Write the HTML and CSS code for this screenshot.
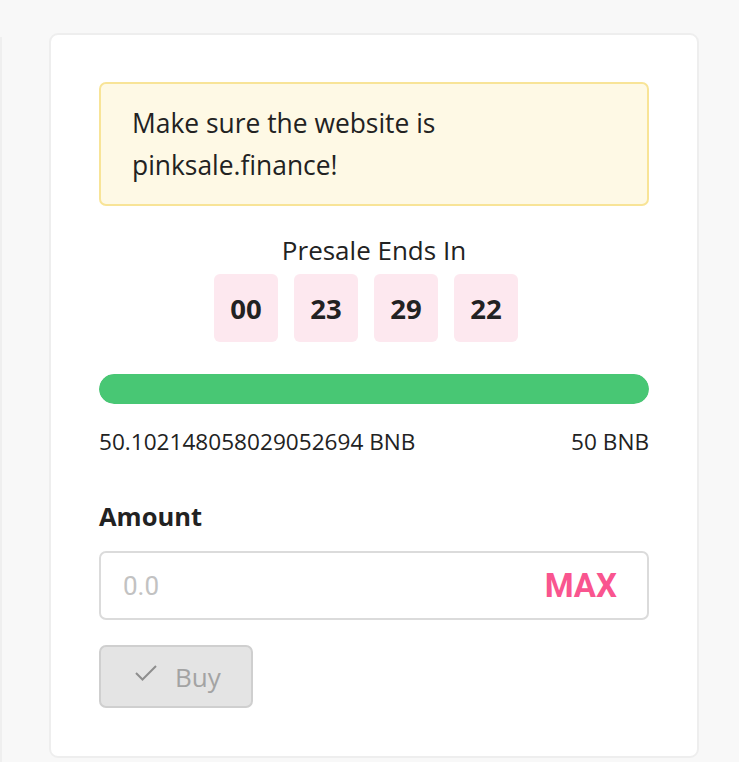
FILE: index.html
```html
<!DOCTYPE html>
<html lang="en">
<head>
<meta charset="utf-8">
<title>Presale</title>
<link rel="stylesheet" href="styles.css">
</head>
<body>
<div class="page">
  <div class="side-edge"></div>
  <div class="card">
    <div class="alert">Make sure the website is pinksale.finance!</div>
    <div class="ends-title">Presale Ends In</div>
    <div class="timer">
      <div class="tbox">00</div>
      <div class="tbox">23</div>
      <div class="tbox">29</div>
      <div class="tbox">22</div>
    </div>
    <div class="progress"><div class="progress-fill" style="width:100%"></div></div>
    <div class="amounts">
      <span>50.102148058029052694 BNB</span>
      <span>50 BNB</span>
    </div>
    <div class="label">Amount</div>
    <div class="input">
      <span class="placeholder">0.0</span>
      <span class="max">MAX</span>
    </div>
    <div class="btn-row">
      <div class="buy-btn">
        <svg class="check" width="24" height="20" viewBox="0 0 24 20"><polyline points="2,10 8.5,16.5 22,3" fill="none" stroke="#8e8e8e" stroke-width="2" stroke-linejoin="miter"/></svg>
        <span>Buy</span>
      </div>
    </div>
  </div>
</div>
</body>
</html>
```
FILE: styles.css
```css
html, body {
  margin: 0;
  padding: 0;
  background: #f8f8f8;
}
body {
  font-family: "Open Sans", "Noto Sans", sans-serif;
  color: #222;
}
.page {
  display: flex;
  align-items: flex-start;
  padding-top: 33px;
  height: 729px;
  overflow: hidden;
}
.side-edge {
  width: 2px;
  margin-top: 4px;
  height: 730px;
  background: #efefef;
  flex: none;
}
.card {
  margin-left: 47px;
  width: 550px;
  background: #fff;
  border: 2px solid #eeeeee;
  border-radius: 9px;
  padding: 47px 48px 48px;
  display: flex;
  flex-direction: column;
  flex: none;
}
.alert {
  background: #fef9e5;
  border: 2px solid #f8e497;
  border-radius: 7px;
  padding: 18px 40px 18px 31px;
  font-size: 26.4px;
  line-height: 42px;
  color: #222;
}
.ends-title {
  margin-top: 26px;
  text-align: center;
  font-size: 26px;
  line-height: 36px;
}
.timer {
  margin-top: 6px;
  display: flex;
  justify-content: center;
}
.tbox {
  width: 64px;
  height: 68px;
  margin-right: 16px;
  background: #fde8ef;
  border-radius: 6px;
  display: flex;
  align-items: center;
  justify-content: center;
  font-weight: 700;
  font-size: 27.5px;
  color: #222;
}
.progress {
  margin-top: 32px;
  height: 30px;
  border-radius: 15px;
  background: #eeeeee;
  overflow: hidden;
}
.progress-fill {
  height: 100%;
  background: #48c774;
  border-radius: 15px;
}
.amounts {
  margin-top: 23px;
  display: flex;
  justify-content: space-between;
  font-size: 22.6px;
  line-height: 30px;
  color: #222;
}
.label {
  margin-top: 41px;
  font-weight: 700;
  font-size: 25.5px;
  line-height: 36px;
  color: #222;
}
.input {
  margin-top: 17px;
  height: 65px;
  border: 2px solid #dbdbdb;
  border-radius: 7px;
  display: flex;
  align-items: center;
  justify-content: space-between;
  padding: 0 30px 0 22px;
}
.placeholder {
  font-family: Roboto, "Noto Sans", sans-serif;
  font-size: 26px;
  color: #c2c2c2;
}
.max {
  font-family: Roboto, "Noto Sans", sans-serif;
  font-weight: 700;
  font-size: 33px;
  color: #f9558f;
}
.btn-row {
  margin-top: 25px;
  display: flex;
}
.buy-btn {
  height: 59px;
  padding: 0 30px 0 33px;
  background: #e4e4e4;
  border: 2px solid #cfcfcf;
  border-radius: 7px;
  display: flex;
  align-items: center;
  gap: 17px;
  font-size: 26px;
  color: #a3a3a3;
}
.check {
  margin-top: -8px;
}
```
